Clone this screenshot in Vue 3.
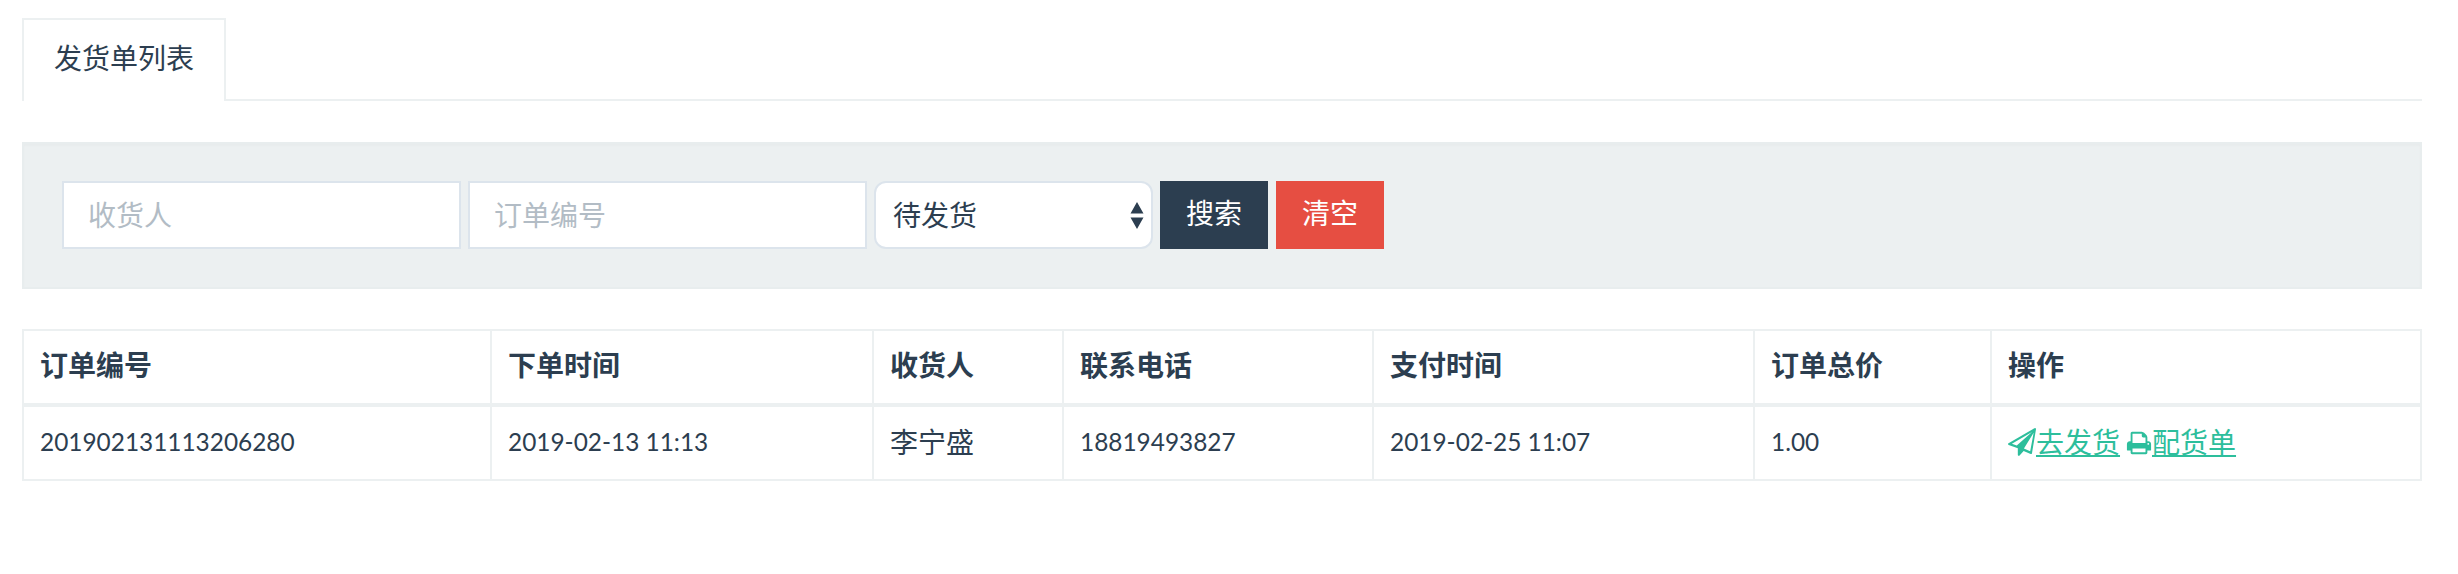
<script setup>
const columns = ['订单编号', '下单时间', '收货人', '联系电话', '支付时间', '订单总价', '操作']
</script>

<template>
  <div class="page">
    <ul class="tabs">
      <li class="tab">发货单列表</li>
    </ul>

    <form class="search" @submit.prevent>
      <input class="input" type="text" placeholder="收货人" />
      <input class="input" type="text" placeholder="订单编号" />
      <div class="select-wrap">
        <select class="select">
          <option>待发货</option>
        </select>
        <svg class="caret" viewBox="0 0 14 27" width="14" height="27">
          <path d="M7 0l6.500 11.500H.5zM.5 15.500h13L7 27z" fill="#2c3e50" />
        </svg>
      </div>
      <button class="btn btn-dark" type="submit">搜索</button>
      <button class="btn btn-red" type="button">清空</button>
    </form>

    <table class="table">
      <thead>
        <tr>
          <th v-for="col in columns" :key="col">{{ col }}</th>
        </tr>
      </thead>
      <tbody>
        <tr>
          <td class="num">201902131113206280</td>
          <td class="num">2019-02-13 11:13</td>
          <td>李宁盛</td>
          <td class="num">18819493827</td>
          <td class="num">2019-02-25 11:07</td>
          <td class="num">1.00</td>
          <td class="actions">
            <svg class="icon" viewBox="0 0 1792 1792" width="28" height="28">
              <path fill="#2dbe9c" fill-rule="evenodd" d="M1764 11Q1797 35 1791 75L1535 1611Q1530 1640 1503 1656Q1489 1664 1472 1664Q1461 1664 1448 1659L1000 1475L740 1760Q722 1783 693 1783Q679 1783 670 1779Q651 1772 640 1755Q628 1739 628 1719V1290L40 1085Q3 1071 0 1030Q-3 991 32 971L1696 11Q1731-10 1764 11ZM1540 250L250 1000L560 1125ZM1640 300L1020 1310L1420 1480Z" />
            </svg><a class="link" href="#">去发货</a>
            <svg class="icon icon-print" viewBox="0 0 1792 1792" width="26" height="26">
              <path fill="#2dbe9c" d="M448 1536h896v-256h-896v256zm0-640h896v-384h-160q-40 0-68-28t-28-68v-160h-640v640zm1152 64q0-26-19-45t-45-19-45 19-19 45 19 45 45 19 45-19 19-45zm128 0v416q0 13-9.5 22.5t-22.5 9.5h-224v160q0 40-28 68t-68 28h-960q-40 0-68-28t-28-68v-160h-224q-13 0-22.5-9.5t-9.5-22.5v-416q0-79 56.5-135.5t135.5-56.5h64v-544q0-40 28-68t68-28h672q40 0 88 20t76 48l152 152q28 28 48 76t20 88v256h64q79 0 135.5 56.5t56.5 135.5z" />
            </svg><a class="link" href="#">配货单</a>
          </td>
        </tr>
      </tbody>
    </table>
  </div>
</template>

<style>
body {
  background: #fff;
}
</style>

<style scoped>
.page {
  padding: 18px 36px 0 22px;
  font-family: "Lato", "Noto Sans CJK SC", sans-serif;
  font-size: 28px;
  color: #2c3e50;
}

.tabs {
  display: flex;
  list-style: none;
  margin: 0 0 41px;
  padding: 0;
  border-bottom: 2px solid #ecf0f1;
  height: 81px;
}

.tab {
  height: 83px;
  box-sizing: border-box;
  padding: 0 30px;
  line-height: 76px;
  background: #fff;
  border: 2px solid #ecf0f1;
  border-bottom: 0;
}

.search {
  display: flex;
  align-items: center;
  gap: 7px;
  height: 147px;
  box-sizing: border-box;
  padding: 0 38px 1px;
  margin-bottom: 40px;
  background: #ecf0f1;
  border: 2px solid #e8edee;
  box-shadow: inset 0 2px 2px rgba(0, 0, 0, 0.02);
}

.input {
  width: 399px;
  height: 68px;
  box-sizing: border-box;
  padding: 0 24px;
  font: inherit;
  color: inherit;
  background: #fff;
  border: 2px solid #dce4ec;
  border-radius: 0;
  outline: none;
}

.input::placeholder {
  color: #b2bcc5;
}

.select-wrap {
  position: relative;
  width: 279px;
  height: 68px;
}

.select {
  appearance: none;
  width: 100%;
  height: 100%;
  box-sizing: border-box;
  padding: 0 17px;
  font: inherit;
  color: inherit;
  background: #fff;
  border: 2px solid #dce4ec;
  border-radius: 12px;
  outline: none;
}

.caret {
  position: absolute;
  top: 21px;
  right: 9px;
}

.btn {
  width: 108px;
  height: 68px;
  padding: 0 0 6px;
  font: inherit;
  color: #fff;
  border: 0;
}

.btn-dark {
  background: #2c3e50;
}

.btn-red {
  background: #e64e42;
  margin-left: 1px;
}

.table {
  width: 100%;
  table-layout: fixed;
  border-collapse: collapse;
  border: 2px solid #ecf0f1;
}

th,
td {
  box-sizing: border-box;
  padding: 0 16px 4px;
  text-align: left;
  border: 2px solid #ecf0f1;
}

th {
  height: 75px;
  padding-bottom: 6px;
  font-weight: 700;
  border-bottom-width: 4px;
}

td {
  height: 75px;
}

.num {
  font-size: 24.4px;
}

th:nth-child(1) { width: 468px; }
th:nth-child(2) { width: 382px; }
th:nth-child(3) { width: 190px; }
th:nth-child(4) { width: 310px; }
th:nth-child(5) { width: 381px; }
th:nth-child(6) { width: 237px; }

.actions {
  white-space: nowrap;
}

.icon {
  vertical-align: -3px;
}

.icon-print {
  margin-left: 6px;
}

.link {
  color: #2dbe9c;
  text-decoration: underline;
}
</style>
